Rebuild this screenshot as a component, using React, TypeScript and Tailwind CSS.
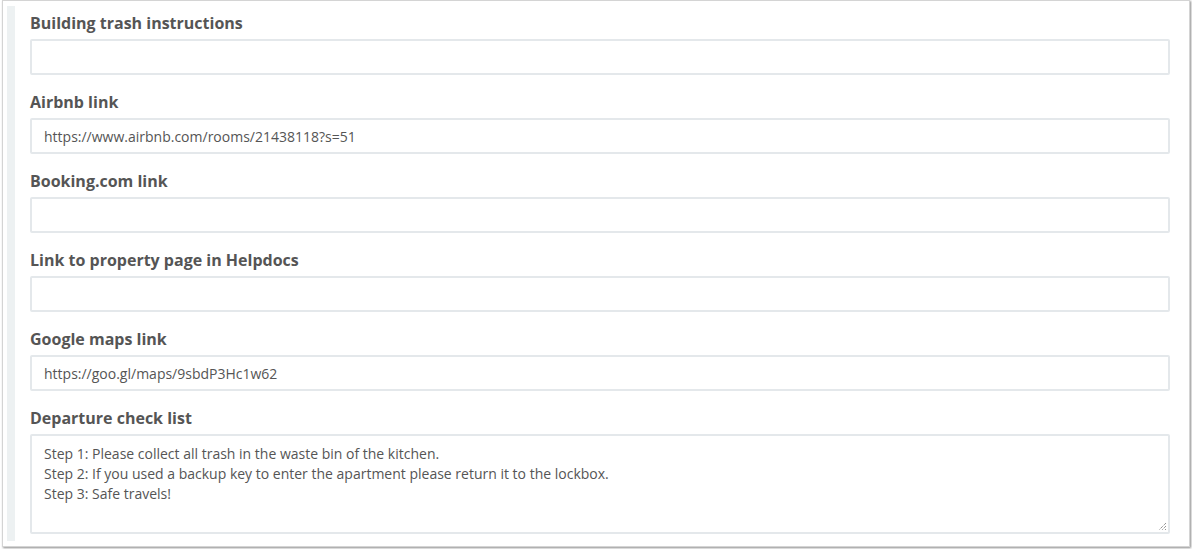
import React from "react";

const fields: { label: string; value: string }[] = [
  { label: "Building trash instructions", value: "" },
  { label: "Airbnb link", value: "https://www.airbnb.com/rooms/21438118?s=51" },
  { label: "Booking.com link", value: "" },
  { label: "Link to property page in Helpdocs", value: "" },
  { label: "Google maps link", value: "https://goo.gl/maps/9sbdP3Hc1w62" },
];

export default function App() {
  return (
    <div
      className="w-[1192px] h-[549px] bg-white"
      style={{ fontFamily: '"Open Sans", "Liberation Sans", sans-serif' }}
    >
      <div className="ml-[2px] w-[1188px] h-[547px] bg-white border border-[#d4d4d4] shadow-[1px_1px_2px_rgba(0,0,0,0.45)] pt-[5px] pl-[4px] pr-[19px]">
        <div className="border-l-[8px] border-[#edf1f2] h-[535px] pl-[15px] pt-[6px]">
          {fields.map((f) => (
            <div key={f.label} className="mb-[16px]">
              <div className="text-[16px] leading-[22px] font-bold text-[#555]">{f.label}</div>
              <div className="mt-[5px] h-[36px] border-2 border-[#e4e8eb] rounded-[2px] bg-white px-[12px] flex items-center text-[14px] text-[#555]">
                {f.value}
              </div>
            </div>
          ))}
          <div>
            <div className="text-[16px] leading-[22px] font-bold text-[#555]">Departure check list</div>
            <div className="relative mt-[5px] h-[100px] border-2 border-[#e4e8eb] rounded-[2px] bg-white px-[12px] pt-[8px] text-[14px] leading-[20px] text-[#555]">
              <div>Step 1: Please collect all trash in the waste bin of the kitchen.</div>
              <div>Step 2: If you used a backup key to enter the apartment please return it to the lockbox.</div>
              <div>Step 3: Safe travels!</div>
              <svg className="absolute right-[1px] bottom-[1px]" width="9" height="9" viewBox="0 0 9 9">
                <path d="M8 1 L1 8 M8 4 L4 8 M8 7 L7 8" stroke="#666" strokeWidth="1" strokeDasharray="1 1" fill="none" />
              </svg>
            </div>
          </div>
        </div>
      </div>
    </div>
  );
}
